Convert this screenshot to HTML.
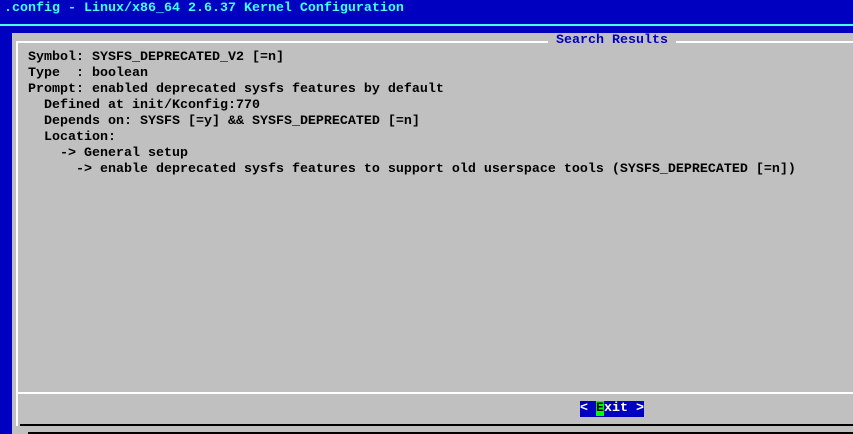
<!DOCTYPE html>
<html><head><style>
body{margin:0;width:853px;height:434px;background:#0000c0;position:relative;overflow:hidden;font-family:"Liberation Mono",monospace;font-weight:bold;font-size:13.33px;}
.t{position:absolute;white-space:pre;line-height:16px;}
</style></head><body>
<div class="t" style="left:4px;top:1px;color:#40ffff">.config - Linux/x86_64 2.6.37 Kernel Configuration</div>
<div style="position:absolute;left:0;top:24px;width:853px;height:2px;background:#40ffff"></div>
<div style="position:absolute;left:12px;top:33px;width:841px;height:401px;background:#c0c0c0"></div>
<div style="position:absolute;left:16px;top:41px;width:2px;height:385px;background:#fff"></div>
<div style="position:absolute;left:16px;top:41px;width:837px;height:2px;background:#fff"></div>
<div style="position:absolute;left:18px;top:392px;width:835px;height:2px;background:#fff"></div>
<div style="position:absolute;left:20px;top:424px;width:833px;height:2px;background:#000"></div>
<div style="position:absolute;left:28px;top:432px;width:825px;height:2px;background:#000"></div>
<div class="t" style="left:548px;top:33px;background:#c0c0c0;color:#0000c0"> Search Results </div>
<div class="t" style="left:28px;top:50px;color:#000">Symbol: SYSFS_DEPRECATED_V2 [=n]
Type  : boolean
Prompt: enabled deprecated sysfs features by default
  Defined at init/Kconfig:770
  Depends on: SYSFS [=y] &amp;&amp; SYSFS_DEPRECATED [=n]
  Location:
    -&gt; General setup
      -&gt; enable deprecated sysfs features to support old userspace tools (SYSFS_DEPRECATED [=n])</div>
<div class="t" style="left:580px;top:401px;background:#0000c0;color:#fff">&lt; <span style="background:#00ff00;color:#000">E</span>xit &gt;</div>
</body></html>
